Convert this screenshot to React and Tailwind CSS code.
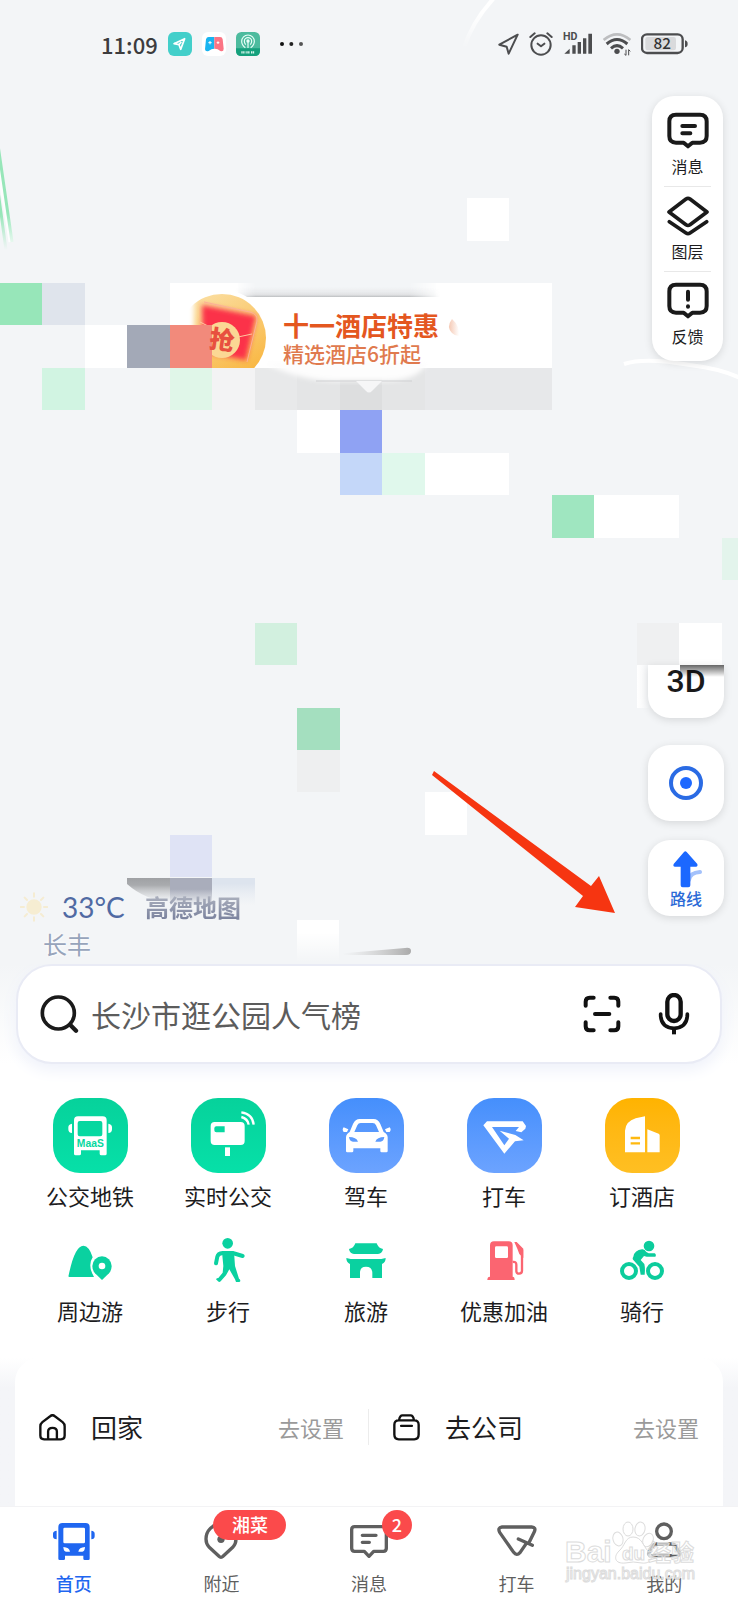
import React from 'react';

// Size of one map block and the y of row 0
const CELL = 42.45;
const ROW_TOP = 283;

// [column, row, columns wide, fill]
const blocks = [
    [11, -2, 1, '#ffffff'],
    [0, 0, 1, '#97e6b9'], [1, 0, 1, '#dfe4ec'], [4, 0, 9, '#ffffff'],
    [2, 1, 1, '#ffffff'], [3, 1, 1, '#a3a9b7'], [4, 1, 1, '#f28a7b'], [5, 1, 8, '#ffffff'],
    [1, 2, 1, '#d1f4e2'], [4, 2, 1, '#e0f6e8'], [5, 2, 1, '#f3f3f4'], [6, 2, 1, '#e8e9ea'],
    [7, 2, 1, '#e4e5e6'], [8, 2, 1, '#dddedf'], [9, 2, 1, '#e4e5e6'], [10, 2, 3, '#e7e8ea'],
    [7, 3, 1, '#ffffff'], [8, 3, 1, '#8fa2f3'],
    [8, 4, 1, '#c4d7f9'], [9, 4, 1, '#e0f8ec'], [10, 4, 2, '#ffffff'],
    [13, 5, 1, '#9fe6c0'], [14, 5, 2, '#ffffff'],
    [17, 6, 1, '#e3f4ec'],
    [6, 8, 1, '#d2f0df'], [15, 8, 1, '#eff0f1'], [16, 8, 1, '#ffffff'],
    [7, 10, 1, '#a4dfbf'],
    [7, 11, 1, '#eeeff0'],
    [10, 12, 1, '#ffffff'],
    [4, 13, 1, '#dfe3f5'],
];

const MapArt = () => (
    <svg className="absolute left-0 top-0" width="738" height="964" viewBox="0 0 738 964" aria-hidden="true">
        <defs>
            <linearGradient id="greenFade" gradientUnits="userSpaceOnUse" x1="0" y1="130" x2="0" y2="250">
                <stop offset="0.7" stopColor="#97e6b9" />
                <stop offset="1" stopColor="#97e6b9" stopOpacity="0" />
            </linearGradient>
            <linearGradient id="whiteFade" x1="0" y1="0" x2="0" y2="1">
                <stop offset="0.3" stopColor="#fff" />
                <stop offset="1" stopColor="#fff" stopOpacity="0" />
            </linearGradient>
            <linearGradient id="grayFade" x1="0" y1="0" x2="0" y2="1">
                <stop offset="0" stopColor="#9fa1a4" />
                <stop offset="0.3" stopColor="#a9abae" />
                <stop offset="1" stopColor="#c9cbce" stopOpacity="0" />
            </linearGradient>
            <linearGradient id="violetFade" x1="0" y1="0" x2="0" y2="1">
                <stop offset="0.4" stopColor="#a9adbb" />
                <stop offset="1" stopColor="#b4b8c6" stopOpacity="0" />
            </linearGradient>
            <linearGradient id="blueFade" x1="0" y1="0" x2="0" y2="1">
                <stop offset="0.2" stopColor="#dde4ee" />
                <stop offset="1" stopColor="#e8ecf2" stopOpacity="0" />
            </linearGradient>
            <linearGradient id="streak" x1="0" y1="0" x2="1" y2="0">
                <stop offset="0.1" stopColor="#c5c5c5" stopOpacity="0" />
                <stop offset="1" stopColor="#aaaaaa" />
            </linearGradient>
            <linearGradient id="sideWhite" x1="0" y1="0" x2="1" y2="0">
                <stop offset="0" stopColor="#fff" />
                <stop offset="1" stopColor="#fff" stopOpacity="0" />
            </linearGradient>
            <linearGradient id="edge" x1="0" y1="0" x2="0" y2="1">
                <stop offset="0" stopColor="#e9ebed" stopOpacity="0" />
                <stop offset="0.8" stopColor="#dfe0e2" />
                <stop offset="1" stopColor="#bcbec0" />
            </linearGradient>
            <linearGradient id="edgeMask" x1="0" y1="0" x2="1" y2="0">
                <stop offset="0" stopColor="#fff" stopOpacity="0" />
                <stop offset="0.1" stopColor="#fff" />
                <stop offset="0.85" stopColor="#fff" />
                <stop offset="1" stopColor="#fff" stopOpacity="0" />
            </linearGradient>
            <linearGradient id="gold" x1="0" y1="0" x2="0.6" y2="1">
                <stop offset="0" stopColor="#fbe3ad" />
                <stop offset="1" stopColor="#f9b845" />
            </linearGradient>
            <linearGradient id="crescent" x1="0" y1="0" x2="1" y2="0">
                <stop offset="0" stopColor="#f5c9b4" />
                <stop offset="1" stopColor="#fff" />
            </linearGradient>
            <filter id="soft" x="-20%" y="-20%" width="140%" height="140%">
                <feGaussianBlur stdDeviation="2.5" />
            </filter>
            <clipPath id="coinClip"><path d="M170 283h105v85H212V325h-42z" /></clipPath>
            <mask id="fadeTop"><rect x="235" y="280" width="205" height="20" fill="url(#edgeMask)" /></mask>
        </defs>

        {/* Roads and waterways */}
        <path d="M-2 165Q4 195 11 242" stroke="#fff" strokeWidth="5" fill="none" opacity="0.8" />
        <path d="M-3 138L12 242M-4 176L6 250" stroke="url(#greenFade)" strokeWidth="3" fill="none" />
        <path d="M494 -2Q472 22 464 48" stroke="url(#whiteFade)" strokeWidth="4" fill="none" />
        <path d="M624 364Q645 357 690 365Q722 369 740 378" stroke="#fff" strokeWidth="4" fill="none" />

        {blocks.map(([col, row, span, fill]) => (
            <rect key={`${col}-${row}`} x={col * CELL} y={ROW_TOP + row * CELL} width={span * CELL} height={CELL} fill={fill} shapeRendering="crispEdges" />
        ))}

        {/* Promotion bubble */}
        <rect x="238" y="283" width="198" height="14" fill="#f3f5f7" mask="url(#fadeTop)" />
        <rect x="235" y="287" width="205" height="10" fill="url(#edge)" mask="url(#fadeTop)" />
        <rect x="246" y="297" width="186" height="71" fill="#fff" />
        <path d="M262 362H428Q418 381 385 381H335Q300 381 262 362Z" fill="#fdfdfd" filter="url(#soft)" />
        <path d="M316 381H412" stroke="#cfd0d2" strokeWidth="1" />
        <path d="M356 381H382L372 391Q369 394 366 391Z" fill="#f6f6f7" />
        <g clipPath="url(#coinClip)">
            <circle cx="222" cy="339" r="49" fill="#fff" />
            <circle cx="222" cy="338" r="44" fill="url(#gold)" />
            <path d="M202 305L256 316L246 360L203 352Z" fill="#fb3048" filter="url(#soft)" />
            <path d="M204 302L250 312Q258 314 257 321L247 362" stroke="#fcae98" strokeWidth="1" fill="none" />
            <path d="M200 322L212 328M238 337L252 334" stroke="#ffc8a0" strokeWidth="1" />
            <rect x="170" y="290" width="24" height="40" fill="#fff" filter="url(#soft)" />
            <circle cx="222" cy="340" r="18" fill="#fbd794" />
        </g>
        <text x="222" y="349" textAnchor="middle" fontSize="25" fontWeight="900" fill="#e8503f" fontFamily="'Noto Sans CJK SC', sans-serif" transform="rotate(8 222 340)">抢</text>
        <path d="M452 319Q446 327 452 333Q455 336 459 336Q460 326 452 319Z" fill="url(#crescent)" />

        {/* Lower edge blocks */}
        <path d="M127 878H170V902Q145 900 127 884Z" fill="url(#grayFade)" />
        <rect x="170" y="878" width="42" height="28" fill="url(#violetFade)" />
        <rect x="212" y="878" width="43" height="28" fill="url(#blueFade)" />
        <rect x="297" y="920" width="42" height="42" fill="url(#whiteFade)" />
        <path d="M335 954L405 948Q411 947 411 951Q411 955 406 955H335Z" fill="url(#streak)" />
        <rect x="637" y="665" width="13" height="43" fill="url(#sideWhite)" />

        {/* Pointer to the route button */}
        <path d="M434 771L591 886L599 876L615 913L575 907L583 896L432 775Z" fill="#f63511" />
    </svg>
);

const BubbleOutline = ({ children }) => (
    <svg width="42" height="42" viewBox="0 0 126 126" fill="none" stroke="#1a1a1a" strokeWidth="12" strokeLinecap="round" strokeLinejoin="round" aria-hidden="true">
        <path d="M27 17H99Q119 17 119 37V81Q119 101 99 101H76L63 112L50 101H27Q7 101 7 81V37Q7 17 27 17Z" />
        {children}
    </svg>
);

const sideTools = [
    { label: '消息', icon: <BubbleOutline><path d="M46 51H84M46 73H70" /></BubbleOutline> },
    {
        label: '图层',
        icon: (
            <svg width="42" height="42" viewBox="0 0 126 126" fill="none" stroke="#1a1a1a" strokeWidth="11" strokeLinecap="round" strokeLinejoin="round" aria-hidden="true">
                <path d="M57 15Q63 11 69 15L120 54L69 92Q63 96 57 92L6 54Z" />
                <path d="M7 83L57 117Q63 121 69 117L119 83" />
            </svg>
        ),
    },
    { label: '反馈', icon: <BubbleOutline><path d="M63 38V62M63 82V83" /></BubbleOutline> },
];

const tileClass = 'w-[75px] h-[75px] rounded-[27px]';

const mainServices = [
    {
        label: '公交地铁',
        tile: 'bg-linear-to-b from-[#06d29b] to-[#06e0a8]',
        icon: (
            <>
                <path fillRule="evenodd" d="M75 55H149Q161 55 161 67V167Q161 172 156 172H145Q140 172 140 167V157H84V167Q84 172 79 172H68Q63 172 63 167V67Q63 55 75 55ZM80 69Q74 69 74 75V109Q74 115 80 115H142Q148 115 148 109V75Q148 69 142 69Z" />
                <path d="M57 77V105Q46 105 46 94V88Q46 79 57 77ZM166 77V105Q177 105 177 94V88Q177 79 166 77Z" />
                <text x="112" y="147" textAnchor="middle" fontSize="31" fontWeight="700" fill="#06d8a0" fontFamily="'Liberation Sans', sans-serif">MaaS</text>
            </>
        ),
    },
    {
        label: '实时公交',
        tile: 'bg-linear-to-b from-[#06d29b] to-[#06e0a8]',
        icon: (
            <>
                <path fillRule="evenodd" d="M71 72H149Q161 72 161 84V129Q161 141 149 141H71Q59 141 59 129V84Q59 72 71 72ZM76 85Q70 85 70 91V97Q70 103 76 103H101V85Z" />
                <path d="M102 148H117V174H102Z" />
                <path d="M151 43Q185 48 188 80M151 57Q170 62 173 80" fill="none" stroke="#fff" strokeWidth="7" />
            </>
        ),
    },
    {
        label: '驾车',
        tile: 'bg-linear-to-b from-[#458ffc] to-[#6ca3ff]',
        icon: (
            <>
                <path fillRule="evenodd" d="M51 159V118Q52 107 62 102L72 78Q79 63 92 63H134Q147 63 154 78L164 102Q175 107 176 118V159Q176 163 172 163H158Q154 163 154 159V151H73V159Q73 163 69 163H55Q51 163 51 159ZM76 102H150L141 82Q138 75 131 75H95Q88 75 85 82ZM60 117Q62 131 72 131H87Q82 117 60 117ZM166 117Q164 131 154 131H139Q144 117 166 117Z" />
                <path d="M44 88L58 94L54 102H44Q38 95 44 88ZM182 88L168 94L172 102H182Q188 95 182 88Z" />
            </>
        ),
    },
    {
        label: '打车',
        tile: 'bg-linear-to-b from-[#458ffc] to-[#6ca3ff]',
        icon: <path d="M49 82L60 70H167L177 84L175 92L163 103L146 99L156 87H75L112 142L126 122L98 98L145 111L170 127L144 130L112 167Z" />,
    },
    {
        label: '订酒店',
        tile: 'bg-linear-to-b from-[#ffb300] to-[#ffbf22]',
        icon: (
            <>
                <path d="M60 163V98Q62 70 92 61L120 55V163ZM127 163V94L161 107Q164 109 164 112V163Z" />
                <path d="M77 120H105M77 136H105" stroke="#ffb90f" strokeWidth="7" />
            </>
        ),
    },
];

const moreServices = [
    {
        label: '周边游',
        color: 'text-[#0ad1a0]',
        icon: (
            <>
                <path d="M10 117Q6 117 8 112Q26 23 52 23Q70 24 80 58Q64 82 84 117Z" />
                <path d="M108 126L87 106Q79 97 79 84A29 29 0 0 1 137 84Q137 97 129 106Z" />
                <circle cx="108" cy="84" r="10" fill="#fff" />
            </>
        ),
    },
    {
        label: '步行',
        color: 'text-[#0ad1a0]',
        icon: (
            <>
                <circle cx="71" cy="16" r="16" />
                <path d="M116 54L86 45H56Q42 46 40 56L36 76" fill="none" stroke="currentColor" strokeWidth="12" strokeLinecap="round" strokeLinejoin="round" />
                <path d="M54 42H90L93 84L105 122Q109 124 109 128Q109 132 105 132H96L93 124L76 94L66 112L50 130Q46 134 42 130L36 124Q38 120 43 120L56 104L58 84Z" />
            </>
        ),
    },
    {
        label: '旅游',
        color: 'text-[#0ad1a0]',
        icon: (
            <path d="M40 16H104Q109 31 123 33Q121 47 108 48H36Q23 47 21 33Q35 31 40 16ZM13 60L26 63H118L131 60Q131 74 120 78V120H91V104Q90 86 72 86Q54 86 54 104V120H24V78Q13 74 13 60Z" />
        ),
    },
    {
        label: '优惠加油',
        color: 'text-[#fb6571]',
        icon: (
            <>
                <path fillRule="evenodd" d="M42 10H86Q98 10 98 22V116Q104 116 104 126H22Q22 116 30 116V22Q30 10 42 10ZM49 25Q45 25 45 29V56Q45 60 49 60H80Q84 60 84 56V29Q84 25 80 25Z" />
                <path d="M98 72Q109 70 109 80V100Q110 107 117 107Q126 106 126 98V36" fill="none" stroke="currentColor" strokeWidth="7" />
                <path d="M103 12L110 12L130 32V60L118 48L112 32Z" />
            </>
        ),
    },
    {
        label: '骑行',
        color: 'text-[#0ccc9c]',
        icon: (
            <>
                <circle cx="33" cy="99" r="21" fill="none" stroke="currentColor" strokeWidth="12" />
                <circle cx="111" cy="99" r="21" fill="none" stroke="currentColor" strokeWidth="12" />
                <circle cx="93" cy="24" r="16" />
                <path d="M46 56Q50 36 72 34Q80 33 85 42L92 46H110Q116 50 112 56H86L78 54L68 66L79 78Q82 90 80 110H68L64 86L46 66Q42 62 46 56Z" />
            </>
        ),
    },
];

const tabs = [
    {
        label: '首页',
        active: true,
        icon: (
            <>
                <path fill="currentColor" fillRule="evenodd" d="M37 18H107Q119 18 119 30V125Q119 129 115 129H104Q100 129 100 125V116H45V125Q45 129 41 129H29Q25 129 25 125V30Q25 18 37 18ZM44 32Q40 32 40 36V75Q40 79 44 79H101Q105 79 105 75V36Q105 32 101 32ZM40 90Q41 104 48 104H60Q58 91 40 90ZM105 90Q104 104 97 104H85Q87 91 105 90Z" />
                <path fill="currentColor" d="M20 41V67Q9 67 9 58V50Q9 42 20 41ZM124 41V67Q134 67 134 58V50Q134 42 124 41Z" />
            </>
        ),
    },
    {
        label: '附近',
        badge: '湘菜',
        badgeClass: 'left-1/2 -ml-2 w-[73px]',
        icon: (
            <>
                <path d="M66 118L36 90Q27 80 27 66A45 45 0 0 1 117 66Q117 80 108 90L78 118Q72 124 66 118Z" />
                <circle cx="72" cy="67" r="11" fill="currentColor" stroke="none" />
            </>
        ),
    },
    {
        label: '消息',
        badge: '2',
        badgeClass: 'left-1/2 ml-[13px] w-[30px]',
        icon: <path d="M29 29H115Q124 29 124 38V94Q124 103 115 103H86L72 118L58 103H29Q20 103 20 94V38Q20 29 29 29ZM52 55H93M52 76H73" />,
    },
    {
        label: '打车',
        icon: <path d="M109 75L124 44Q130 31 116 30H27Q13 32 20 46L62 106Q71 118 81 107L98 82M76 66L118 85" />,
    },
    {
        label: '我的',
        icon: (
            <>
                <circle cx="72" cy="43" r="22" />
                <path d="M48 81H96Q103 81 107 88L117 105Q121 115 112 116H32Q23 115 27 105L37 88Q41 81 48 81Z" />
            </>
        ),
    },
];

const places = [
    {
        label: '回家',
        icon: <path d="M34 6Q40 1 46 6L70 24Q76 29 76 36V64Q76 75 65 75H15Q4 75 4 64V36Q4 29 10 24ZM27 75V52Q27 41 40 41Q53 41 53 52V75" />,
    },
    {
        label: '去公司',
        icon: <path d="M17 19H63Q76 19 76 32V61Q76 75 63 75H17Q4 75 4 61V32Q4 19 17 19ZM18 18Q20 4 28 4H52Q60 4 62 18M24 35H56" />,
    },
];

const StatusBar = () => (
    <header className="flex items-center justify-between h-24 pl-[101px] pr-[50px] pb-2">
        <div className="flex items-center gap-[10px]">
            <span className="text-[22px] leading-6 font-medium text-[#3c3c3e] w-[57px]">11:09</span>
            <svg width="24" height="24" viewBox="0 0 72 72" aria-hidden="true">
                <rect width="72" height="72" rx="18" fill="#43cfca" />
                <path d="M50 20L18 35L33 38L38 52ZM33 38L40 30" fill="none" stroke="#fff" strokeWidth="5" strokeLinejoin="round" />
            </svg>
            <svg width="24" height="24" viewBox="0 0 72 72" aria-hidden="true">
                <rect width="72" height="72" rx="18" fill="#fff" />
                <path d="M20 15H37V50Q28 50 20 57Q10 60 9 52L12 22Q14 15 20 15Z" fill="#18b4f0" />
                <path d="M37 15H54Q61 15 62 22L65 50Q65 60 55 57Q46 49 37 50Z" fill="#fb7484" />
                <path d="M19 32H29M24 27V37M44 32H52M48 28V36" stroke="#fff" strokeWidth="3" />
            </svg>
            <svg width="24" height="24" viewBox="0 0 72 72" aria-hidden="true">
                <rect width="72" height="72" rx="16" fill="#4dbb9e" />
                <path d="M0 49H72V56Q72 72 56 72H16Q0 72 0 56Z" fill="#15a07c" />
                <path d="M36 28V48M28 47Q17 40 17 28A19 19 0 0 1 55 28Q55 40 44 47M29 38Q25 34 25 28A11 11 0 0 1 47 28Q47 34 43 38" fill="none" stroke="#e9fff8" strokeWidth="3.500" />
                <circle cx="36" cy="27" r="5" fill="#e9fff8" />
                <path d="M16 61H28M31 61H42M45 61H56" stroke="#d8f5ec" strokeWidth="7" strokeDasharray="4 1.500" />
            </svg>
            <svg className="ml-2.5" width="24" height="24" viewBox="0 0 72 72" aria-hidden="true">
                <circle cx="6" cy="36" r="6" fill="#111" />
                <circle cx="34" cy="36" r="6" fill="#222" />
                <circle cx="63" cy="36" r="6" fill="#555" />
            </svg>
        </div>
        <div className="flex items-center gap-[10px] text-[#4c4d4f]">
            <svg width="21" height="24" viewBox="0 0 63 72" fill="none" stroke="currentColor" strokeWidth="6" strokeLinejoin="round" aria-hidden="true">
                <path d="M59 8L4 38L26 44L32 65Z" />
            </svg>
            <svg width="24" height="24" viewBox="0 0 72 72" fill="none" stroke="currentColor" strokeWidth="6" strokeLinecap="round" strokeLinejoin="round" aria-hidden="true">
                <circle cx="36" cy="39" r="29" />
                <path d="M4 15L17 4M68 15L55 4M26 35L36 43L46 35" />
            </svg>
            <svg className="overflow-visible" width="30" height="24" viewBox="0 0 90 72" fill="currentColor" aria-hidden="true">
                <text x="0" y="25" fontSize="32" fontWeight="700" fontFamily="Roboto, sans-serif">HD</text>
                <path d="M4 65L20 50V65ZM28 40H38V65H28ZM44 30H54V65H44ZM60 19H70V65H60ZM76 5H87V65H76Z" />
            </svg>
            <svg width="28" height="24" viewBox="0 0 84 72" fill="none" stroke="currentColor" strokeWidth="8" aria-hidden="true">
                <path d="M2 24Q42-10 82 24" stroke="#bdbec0" />
                <path d="M11 36Q42 9 73 36M24 49Q42 33 60 49" strokeWidth="9" />
                <circle cx="42" cy="58" r="8" fill="currentColor" stroke="none" />
                <path d="M69 53V70L64 66M77 70V53L82 58" strokeWidth="3" />
            </svg>
            <svg width="47" height="24" viewBox="0 0 141 72" aria-hidden="true">
                <rect x="3" y="7" width="122" height="56" rx="15" fill="none" stroke="currentColor" strokeWidth="7" />
                <rect x="13" y="15" width="92" height="40" rx="7" fill="#d9dadc" />
                <path d="M132 25Q140 27 140 36Q140 45 132 46Z" fill="currentColor" />
                <text x="64" y="52" textAnchor="middle" fontSize="46" fontWeight="500" fill="#333" fontFamily="'Noto Sans CJK SC', sans-serif">82</text>
            </svg>
        </div>
    </header>
);

const Watermark = () => (
    <svg className="pointer-events-none absolute right-[38px] bottom-3 z-20" width="136" height="70" viewBox="0 0 136 70" aria-hidden="true">
        <g fill="#fff" fillOpacity="0.6" stroke="#dcdcdc" strokeWidth="1" fontFamily="'Liberation Sans', 'Noto Sans CJK SC', sans-serif" fontWeight="700">
            <ellipse cx="54" cy="21" rx="5" ry="7" transform="rotate(-15 54 21)" />
            <ellipse cx="64" cy="11" rx="5" ry="7" />
            <ellipse cx="76" cy="11" rx="5" ry="7" transform="rotate(12 76 11)" />
            <ellipse cx="84" cy="22" rx="5" ry="7" transform="rotate(25 84 22)" />
            <path d="M69 19C78 19 79 28 84 33C91 40 86 46 78 45Q69 43 61 45C51 46 49 39 55 33C61 28 61 19 69 19Z" />
            <text x="1" y="44" fontSize="30">Bai</text>
            <text x="58" y="42" fontSize="19">du</text>
            <text x="84" y="43" fontSize="23">经验</text>
            <text x="2" y="61" fontSize="16" fontWeight="400">jingyan.baidu.com</text>
        </g>
    </svg>
);

const floatShadow = 'shadow-[0_2px_8px_rgba(0,0,0,0.12)]';

const App = () => {
    return (
        <div className="relative flex flex-col min-h-screen overflow-hidden bg-white text-[#1c1c1e] font-['Noto_Sans_CJK_SC',sans-serif]">
            {/* Map */}
            <section className="relative bg-[#f3f5f7] pb-[6px]">
                <MapArt />
                <div className="absolute left-[283px] top-[307px] whitespace-nowrap">
                    <p className="text-[26px] leading-9 font-bold text-[#e4571f]">十一酒店特惠</p>
                    <p className="text-[21px] leading-5 font-medium text-[#e07a4e]">精选酒店6折起</p>
                </div>

                <div className="relative">
                    <StatusBar />
                    <div className="flex justify-end pr-[15px]">
                        <div className={`w-[71px] px-3 pt-[6px] pb-1 rounded-[22px] bg-white ${floatShadow}`}>
                            {sideTools.map((tool) => (
                                <button key={tool.label} className="flex flex-col items-center w-full pt-[7px] pb-2 border-b border-[#e8e8e8] last:border-transparent">
                                    {tool.icon}
                                    <span className="mt-[3px] text-base leading-6">{tool.label}</span>
                                </button>
                            ))}
                        </div>
                    </div>

                    <div className="flex items-end justify-between mt-[304px] pl-5 pr-[14px]">
                        {/* Weather */}
                        <div>
                            <div className="flex items-center h-9">
                                <svg width="28" height="30" viewBox="0 0 84 90" aria-hidden="true">
                                    <circle cx="42" cy="45" r="23" fill="#f6edd2" />
                                    <path d="M42 4V14M42 76V86M2 45H12M72 45H82M14 17L21 24M63 66L70 73M70 17L63 24M21 66L14 73" stroke="#f5ecd2" strokeWidth="6" strokeLinecap="round" />
                                </svg>
                                <span className="ml-[14px] text-[28px] font-['Lato'] text-[#506aa3] w-[66px] whitespace-nowrap">33°C</span>
                                <span className="ml-[17px] text-2xl font-bold bg-linear-to-b from-[#b6bac4] to-[#747c99] bg-clip-text text-transparent">高德地图</span>
                            </div>
                            <p className="pl-[23px] mt-[5px] text-2xl leading-7 text-[#97a4bb] [text-shadow:0_0_3px_#fff,0_0_3px_#fff]">长丰</p>
                        </div>

                        {/* Map controls */}
                        <div className="flex flex-col items-end mb-[42px]">
                            <button className={`relative w-[76px] h-[53px] rounded-b-[22px] bg-white text-[32px] leading-8 font-medium font-['Roboto'] text-[#1a1a1a] pb-6 ${floatShadow}`}>
                                3D
                                <span className="absolute left-8 right-0 top-0 h-3 bg-linear-to-b from-black/60 to-transparent"></span>
                            </button>
                            <button aria-label="定位" className={`flex items-center justify-center w-[76px] h-[76px] mt-[27px] rounded-[22px] bg-white ${floatShadow}`}>
                                <svg width="34" height="34" viewBox="0 0 34 34" aria-hidden="true">
                                    <circle cx="17" cy="17" r="15" fill="none" stroke="#2a6be4" strokeWidth="4" />
                                    <circle cx="17" cy="17" r="6" fill="#1d68ff" />
                                </svg>
                            </button>
                            <button className={`flex flex-col items-center w-[76px] h-[76px] mt-[19px] pt-[10px] rounded-[22px] bg-white ${floatShadow}`}>
                                <svg width="32" height="38" viewBox="0 0 96 114" aria-hidden="true">
                                    <path d="M57 90Q60 68 90 66" fill="none" stroke="#a3c1fb" strokeWidth="12" strokeLinecap="round" />
                                    <path d="M42 6Q46 2 50 6L82 42Q84 50 78 50H61V106Q61 112 55 112H38Q32 112 32 106V50H15Q8 50 11 42Z" fill="#1b68ff" />
                                </svg>
                                <span className="text-base leading-5 font-medium text-[#2b6ad6]">路线</span>
                            </button>
                        </div>
                    </div>
                </div>
            </section>

            {/* Search */}
            <section className="bg-linear-to-b from-[#f3f5f7] to-white px-4">
                <form className="flex items-center h-[100px] pl-[21px] pr-[29px] rounded-[36px] border-2 border-[#e9ebf5] bg-white shadow-[0_6px_16px_#eef1fa]" onSubmit={(e) => e.preventDefault()}>
                    <label htmlFor="search" aria-label="搜索">
                        <svg width="40" height="40" viewBox="0 0 120 120" fill="none" stroke="#1a1a1a" strokeWidth="11" strokeLinecap="round" aria-hidden="true">
                            <circle cx="58" cy="57" r="48" />
                            <path d="M94 93L111 110" strokeWidth="13" />
                        </svg>
                    </label>
                    <input
                        id="search"
                        type="text"
                        placeholder="长沙市逛公园人气榜"
                        className="flex-1 min-w-0 ml-3 text-[30px] leading-10 bg-transparent outline-none placeholder:text-[#5c5c5c] placeholder:opacity-100"
                    />
                    <button type="button" aria-label="扫一扫">
                        <svg width="38" height="38" viewBox="0 0 114 114" fill="none" stroke="#111" strokeWidth="12" strokeLinecap="round" aria-hidden="true">
                            <path d="M8 32V20Q8 8 20 8H32M82 8H94Q106 8 106 20V32M106 82V94Q106 106 94 106H82M32 106H20Q8 106 8 94V82M36 57H79" />
                        </svg>
                    </button>
                    <button type="button" aria-label="语音" className="ml-9">
                        <svg width="34" height="42" viewBox="0 0 102 126" fill="none" stroke="#111" strokeWidth="11" strokeLinecap="round" aria-hidden="true">
                            <rect x="31" y="6" width="40" height="78" rx="20" strokeWidth="13" />
                            <path d="M11 63V68Q13 104 51 106Q89 104 91 68V63" />
                            <path d="M51 106V124" strokeLinecap="butt" strokeWidth="12" />
                        </svg>
                    </button>
                </form>
            </section>

            {/* Services */}
            <nav className="pl-[21px] pr-[27px] pt-[34px] pb-[34px]">
                <div className="grid grid-cols-5">
                    {mainServices.map((item) => (
                        <a key={item.label} href="#" className="flex flex-col items-center">
                            <span className={`${tileClass} ${item.tile}`}>
                                <svg width="75" height="75" viewBox="0 0 225 225" fill="#fff" aria-hidden="true">{item.icon}</svg>
                            </span>
                            <span className="mt-2 text-[22px] leading-7">{item.label}</span>
                        </a>
                    ))}
                </div>
                <div className="grid grid-cols-5 mt-[29px]">
                    {moreServices.map((item) => (
                        <a key={item.label} href="#" className="flex flex-col items-center">
                            <svg className={item.color} width="48" height="48" viewBox="0 0 144 144" fill="currentColor" aria-hidden="true">{item.icon}</svg>
                            <span className="mt-[10px] text-[22px] leading-7">{item.label}</span>
                        </a>
                    ))}
                </div>
            </nav>

            {/* Saved places */}
            <section className="flex flex-1 flex-col px-[15px] bg-linear-to-b from-white to-[#f4f5f8] to-20%">
                <div className="grid grid-cols-2 flex-1 content-start pt-[51px] pb-14 rounded-t-3xl bg-white">
                    {places.map((place, i) => (
                        <button key={place.label} className={`flex items-center px-6 h-9 ${i === 0 ? 'border-r border-[#ececec]' : ''}`}>
                            <svg width="27" height="27" viewBox="0 0 80 80" fill="none" stroke="#111" strokeWidth="7" strokeLinecap="round" strokeLinejoin="round" aria-hidden="true">{place.icon}</svg>
                            <span className="ml-[25px] text-[26px] leading-9">{place.label}</span>
                            <span className="ml-auto text-[22px] leading-9 text-[#9a9a9a]">去设置</span>
                        </button>
                    ))}
                </div>
            </section>

            {/* Tab bar */}
            <footer className="grid grid-cols-5 h-[94px] pt-[10px] border-t border-[#f3f3f5] bg-white">
                {tabs.map((tab) => (
                    <a key={tab.label} href="#" className={`relative flex flex-col items-center ${tab.active ? 'text-[#1f66f0]' : 'text-[#5f5f5f]'}`}>
                        <svg
                            width="48"
                            height="48"
                            viewBox="0 0 144 144"
                            fill="none"
                            stroke={tab.active ? 'none' : 'currentColor'}
                            strokeWidth="10"
                            strokeLinecap="round"
                            strokeLinejoin="round"
                            aria-hidden="true"
                        >
                            {tab.icon}
                        </svg>
                        <span className={`mt-[6px] text-lg leading-6 ${tab.active ? 'font-medium' : ''}`}>{tab.label}</span>
                        {tab.badge && (
                            <span className={`absolute -top-[7px] h-[30px] rounded-full bg-[#fb4a4b] text-white text-center text-lg leading-[28px] font-medium ${tab.badgeClass}`}>
                                {tab.badge}
                            </span>
                        )}
                    </a>
                ))}
            </footer>
            <Watermark />
        </div>
    );
};

export default App;
